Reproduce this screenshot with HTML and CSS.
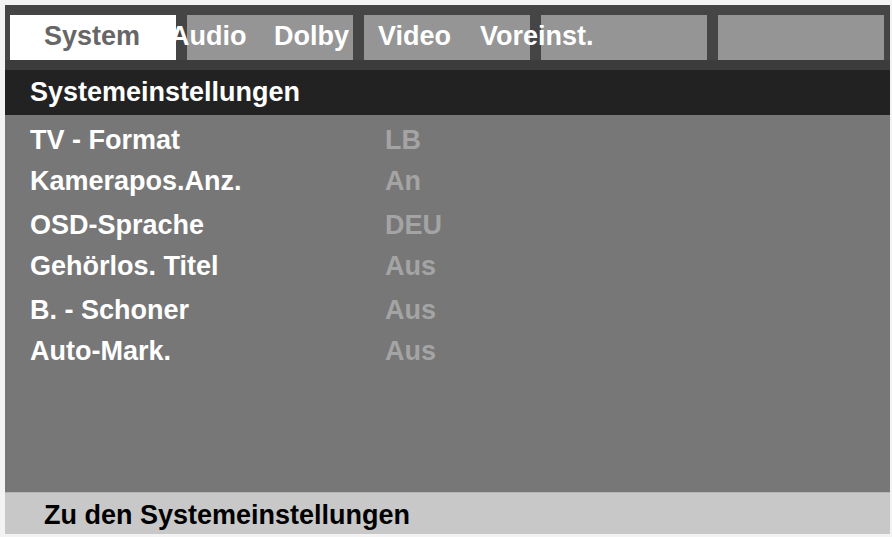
FILE: index.html
```html
<!DOCTYPE html>
<html lang="de">
<head>
  <meta charset="UTF-8">
  <title>Systemeinstellungen</title>
  <link rel="stylesheet" href="styles.css">
</head>
<body>
  <div class="osd">
    <!-- Tab strip -->
    <div class="tabbar">
      <div class="tab active"><span>System</span></div>
      <div class="tab"></div>
      <div class="tab"></div>
      <div class="tab"></div>
      <div class="tab"></div>
      <div class="tab-labels">
        <span class="lbl-audio">Audio</span>
        <span class="lbl-dolby">Dolby</span>
        <span class="lbl-video">Video</span>
        <span class="lbl-preset">Voreinst.</span>
      </div>
    </div>

    <div class="section-title">Systemeinstellungen</div>

    <!-- Settings list -->
    <div class="settings">
      <div class="row"><span class="name">TV - Format</span><span class="value">LB</span></div>
      <div class="row"><span class="name">Kamerapos.Anz.</span><span class="value">An</span></div>
      <div class="row"><span class="name">OSD-Sprache</span><span class="value">DEU</span></div>
      <div class="row"><span class="name">Gehörlos. Titel</span><span class="value">Aus</span></div>
      <div class="row"><span class="name">B. - Schoner</span><span class="value">Aus</span></div>
      <div class="row"><span class="name">Auto-Mark.</span><span class="value">Aus</span></div>
    </div>

    <div class="hint">Zu den Systemeinstellungen</div>
  </div>
</body>
</html>
```

FILE: styles.css
```css
* {
  margin: 0;
  padding: 0;
  box-sizing: border-box;
}

body {
  background-color: #f3f3f3;
  font-family: 'Liberation Sans', Arial, sans-serif;
  font-weight: 700;
  font-size: 27px;
  padding: 5px 2px 3px 5px;
  height: 537px;
  overflow: hidden;
}

.osd {
  width: 885px;
  height: 529px;
  display: flex;
  flex-direction: column;
}

.tabbar {
  position: relative;
  height: 65px;
  background-color: #454545;
  border-bottom: 10px solid #3c3c3c;
  padding: 10px 4px 0 5px;
  display: flex;
  gap: 11px;
}

.tab {
  width: 166px;
  height: 45px;
  background-color: #959595;
}

.tab.active {
  position: relative;
  z-index: 2;
  background-color: #ffffff;
  color: #666666;
  padding-left: 34px;
  line-height: 43px;
}

/* labels sit under the active tab, so it clips the first letter */
.tab-labels {
  position: absolute;
  z-index: 1;
  top: 10px;
  left: 168px;
  height: 45px;
  line-height: 43px;
  color: #ffffff;
  white-space: nowrap;
}

.tab-labels span {
  position: absolute;
  top: 0;
}

.lbl-audio { left: -3px; }
.lbl-dolby { left: 101px; }
.lbl-video { left: 205px; }
.lbl-preset { left: 307px; }

.section-title {
  height: 45px;
  line-height: 45px;
  background-color: #222222;
  color: #ffffff;
  padding-left: 25px;
}

.settings {
  flex: 1;
  background-color: #777777;
  padding-top: 5px;
}

.row {
  display: flex;
  height: 41px;
  line-height: 41px;
  padding-left: 25px;
}

.row:nth-child(even) {
  height: 44px;
}

.name {
  width: 355px;
  color: #ffffff;
}

.value {
  color: #a4a4a4;
}

.hint {
  height: 42px;
  line-height: 44px;
  background-color: #c8c8c8;
  border-top: 1px solid #b4b4b4;
  color: #000000;
  padding-left: 39px;
}
```
